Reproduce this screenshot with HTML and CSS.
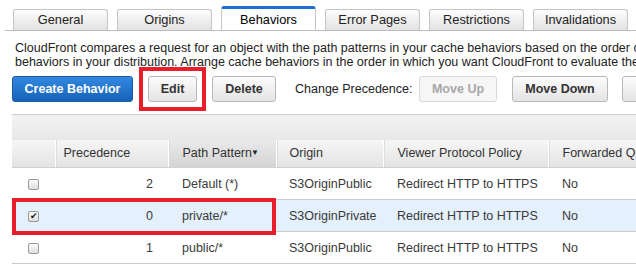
FILE: index.html
```html
<!DOCTYPE html>
<html lang="en">
<head>
    <meta charset="UTF-8">
    <title>CloudFront Distribution - Behaviors</title>
    <link rel="stylesheet" href="styles.css">
</head>
<body>
    <div class="tabs">
        <div class="tab">General</div>
        <div class="tab">Origins</div>
        <div class="tab active">Behaviors</div>
        <div class="tab">Error Pages</div>
        <div class="tab">Restrictions</div>
        <div class="tab">Invalidations</div>
        <div class="tab">Tags</div>
    </div>

    <p class="intro">
        CloudFront compares a request for an object with the path patterns in your cache behaviors based on the order of the cache<br>
        behaviors in your distribution. Arrange cache behaviors in the order in which you want CloudFront to evaluate them.
    </p>

    <div class="toolbar">
        <button class="btn primary">Create Behavior</button>
        <span class="mark"><button class="btn edit">Edit</button></span>
        <button class="btn delete">Delete</button>
        <span class="label">Change Precedence:</span>
        <button class="btn up" disabled>Move Up</button>
        <button class="btn down">Move Down</button>
        <button class="btn">Save</button>
    </div>

    <div class="grid-wrap">
        <table class="grid">
            <colgroup>
                <col class="col-check">
                <col class="col-prec">
                <col class="col-path">
                <col class="col-origin">
                <col class="col-viewer">
                <col class="col-fwd">
            </colgroup>
            <thead>
                <tr class="band"><th colspan="6"></th></tr>
                <tr class="heads">
                    <th class="first"></th>
                    <th class="prec">Precedence</th>
                    <th class="sorted">Path Pattern<span class="arrow">&#9660;</span></th>
                    <th class="origin">Origin</th>
                    <th>Viewer Protocol Policy</th>
                    <th>Forwarded Query Strings</th>
                </tr>
            </thead>
            <tbody>
                <tr>
                    <td class="box"><span class="check"></span></td>
                    <td class="num">2</td>
                    <td>Default (*)</td>
                    <td class="origin">S3OriginPublic</td>
                    <td>Redirect HTTP to HTTPS</td>
                    <td>No</td>
                </tr>
                <tr class="selected">
                    <td class="box"><span class="check on">&#10004;</span></td>
                    <td class="num">0</td>
                    <td>private/*</td>
                    <td class="origin">S3OriginPrivate</td>
                    <td>Redirect HTTP to HTTPS</td>
                    <td>No</td>
                </tr>
                <tr>
                    <td class="box"><span class="check"></span></td>
                    <td class="num">1</td>
                    <td>public/*</td>
                    <td class="origin">S3OriginPublic</td>
                    <td>Redirect HTTP to HTTPS</td>
                    <td>No</td>
                </tr>
            </tbody>
        </table>
        <!-- annotation box round the selected row -->
        <div class="row-mark"></div>
    </div>
</body>
</html>
```

FILE: styles.css
```css
* {
    box-sizing: border-box;
    margin: 0;
    padding: 0;
}

body {
    font-family: 'Liberation Sans', Arial, sans-serif;
    font-size: 12.5px;
    color: #333;
    background: #fff;
    width: 636px;
    height: 279px;
    overflow: hidden;
}

/* tabs */
.tabs {
    display: flex;
    align-items: flex-end;
    gap: 9px;
    height: 31px;
    margin-left: 5px;
    padding-left: 8px;
    border-bottom: 1px solid #bdbdbd;
    white-space: nowrap;
    overflow: hidden;
}

.tab {
    flex: none;
    width: 95px;
    height: 22px;
    margin-bottom: -1px;
    border: 1px solid #c4c4c4;
    border-bottom-color: #bdbdbd;
    border-radius: 3px 3px 0 0;
    background: linear-gradient(#fdfdfd, #e2e2e2);
    text-align: center;
    font-size: 12.8px;
    line-height: 20px;
    color: #222;
}

.tab.active {
    height: 25px;
    background: #fff;
    border-top: 3px solid #1d6fd2;
    border-bottom-color: #fff;
    color: #000;
    line-height: 21px;
}

/* intro text */
.intro {
    padding: 10px 0 0 15px;
    line-height: 14px;
    white-space: nowrap;
    color: #222;
}

/* buttons */
.toolbar {
    display: flex;
    align-items: center;
    margin-top: 7px;
    padding-left: 12px;
    height: 26px;
    white-space: nowrap;
}

.btn {
    flex: none;
    height: 26px;
    padding: 0 13px;
    font-family: inherit;
    font-size: 12.5px;
    font-weight: bold;
    color: #333;
    background: linear-gradient(#fcfcfc, #e4e4e4);
    border: 1px solid #b9b9b9;
    border-radius: 3px;
    margin-right: 15px;
}

.btn.primary {
    width: 121px;
    padding: 0;
    color: #fff;
    background: linear-gradient(#3488e0, #1562b8);
    border-color: #1a5aa6;
    margin-right: 6px;
}

/* red annotation round the Edit button */
.mark {
    flex: none;
    display: block;
    margin: -9px 6px -9px 0;
    padding: 5px;
    border: 4px solid #e81e2b;
}

.btn.edit {
    display: block;
    width: 49px;
    padding: 0;
    margin: 0;
}

.btn.delete { width: 64px; padding: 0; margin-right: 19px; }
.btn.up { width: 78px; padding: 0; }
.btn.down { width: 96px; padding: 0; margin-right: 14px; }

.btn[disabled] {
    color: #a8a8a8;
    background: #f6f6f6;
    border-color: #d8d8d8;
}

.label {
    flex: none;
    width: 124px;
    color: #222;
}

/* table */
.grid-wrap {
    position: relative;
    margin: 12px 0 0 12px;
}

.grid {
    border-collapse: collapse;
    width: 720px;
    table-layout: fixed;
    border-top: 1px solid #cfcfcf;
}

.col-check { width: 43px; }
.col-prec { width: 113px; }
.col-path { width: 108px; }
.col-origin { width: 107px; }
.col-viewer { width: 165px; }
.col-fwd { width: 184px; }

.band th {
    height: 25px;
    background: linear-gradient(#f3f3f3, #e7e7e7);
}

.heads th {
    height: 28px;
    font-weight: normal;
    text-align: left;
    color: #333;
    padding-left: 14px;
    background: linear-gradient(#f6f6f6, #e3e3e3);
    border-left: 1px solid #fff;
    border-bottom: 1px solid #d0d0d0;
    box-shadow: inset 1px 0 0 #dcdcdc;
    white-space: nowrap;
    overflow: hidden;
}

.heads th.first { border-left: 0; box-shadow: none; }
.heads th.prec { padding-left: 8px; }
.heads th.origin { padding-left: 13px; }

.heads th.sorted {
    background: linear-gradient(#eaeaea, #d3d3d3);
}

.arrow {
    font-size: 8px;
    vertical-align: 2px;
    margin-left: -1px;
    color: #222;
}

.grid td {
    height: 32px;
    padding-left: 14px;
    border-bottom: 1px solid #cccccc;
    white-space: nowrap;
    overflow: hidden;
    color: #3a3a3a;
}

.grid td.origin { padding-left: 13px; }

.grid td.num {
    text-align: right;
    padding-right: 15px;
}

.grid td.box { padding-left: 16px; }

.grid tr.selected td { background: #e4f0fc; }

.check {
    display: inline-block;
    width: 11px;
    height: 11px;
    border: 1px solid #9a9a9a;
    border-radius: 2px;
    background: linear-gradient(#fdfdfd, #dedede);
    vertical-align: middle;
    font-size: 9px;
    line-height: 9px;
    text-align: center;
    color: #222;
}

.row-mark {
    position: absolute;
    left: 0;
    top: 84px;
    width: 264px;
    height: 37px;
    border: 4px solid #e81e2b;
}
```
